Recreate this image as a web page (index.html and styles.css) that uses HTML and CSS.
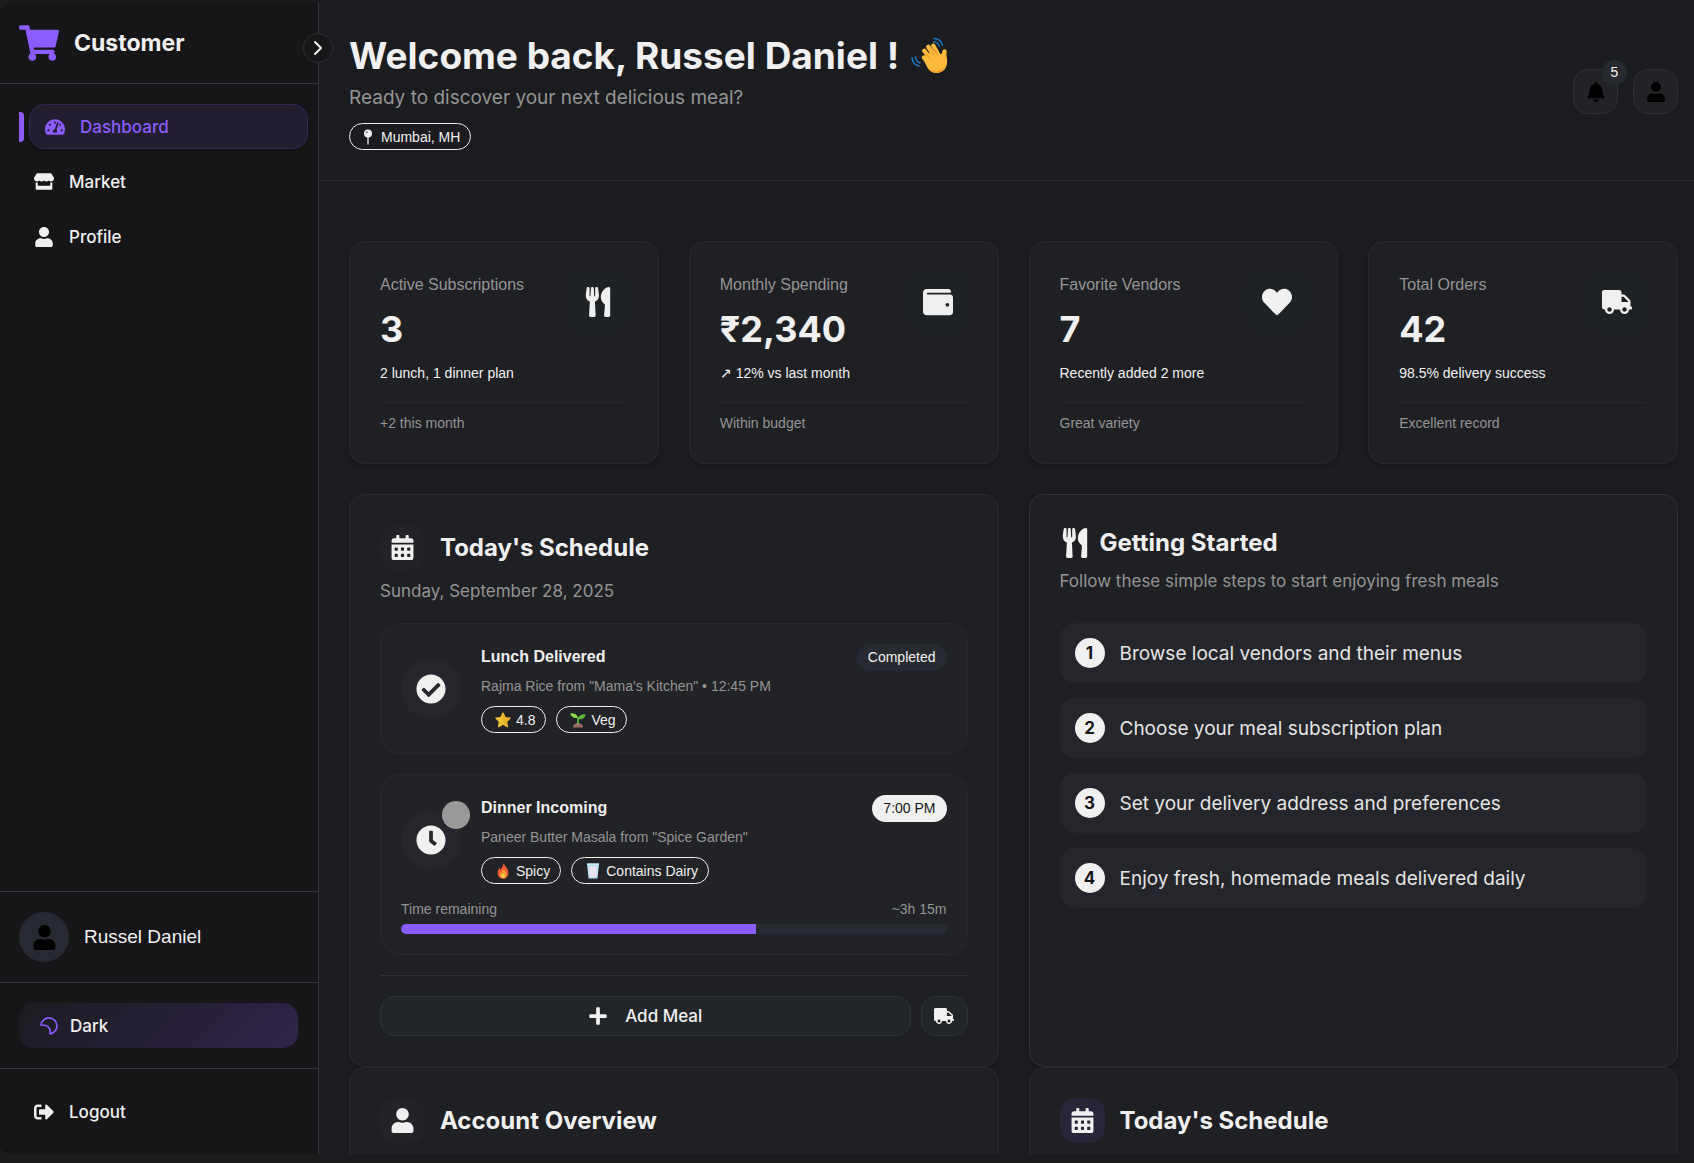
FILE: index.html
```html
<!DOCTYPE html>
<html lang="en">
<head>
<meta charset="utf-8">
<meta name="viewport" content="width=device-width, initial-scale=1">
<title>Customer Dashboard</title>
<link rel="stylesheet" href="styles.css">
</head>
<body>
<svg class="sprite" aria-hidden="true">
  <symbol id="cart" viewBox="0 0 576 512"><path d="M528.12 301.319l47.273-208C578.806 78.301 567.391 64 551.99 64H159.208l-9.166-44.81C147.758 8.021 137.93 0 126.529 0H24C10.745 0 0 10.745 0 24v16c0 13.255 10.745 24 24 24h69.883l70.248 343.435C147.325 417.1 136 435.222 136 456c0 30.928 25.072 56 56 56s56-25.072 56-56c0-15.674-6.447-29.835-16.824-40h209.647C430.447 426.165 424 440.326 424 456c0 30.928 25.072 56 56 56s56-25.072 56-56c0-22.172-12.888-41.332-31.579-50.405l5.517-24.276c3.413-15.018-8.002-29.319-23.403-29.319H218.117l-6.545-32h293.145c11.206 0 20.92-7.754 23.403-18.681z"/></symbol>
  <symbol id="gauge" viewBox="0 0 576 512"><path d="M288 32C128.94 32 0 160.94 0 320c0 52.8 14.25 102.26 39.06 144.8 5.61 9.62 16.3 15.2 27.44 15.2h443c11.14 0 21.83-5.58 27.44-15.2C561.75 422.26 576 372.8 576 320c0-159.06-128.94-288-288-288zm0 64c14.71 0 26.58 10.13 30.32 23.65-1.11 2.26-2.64 4.23-3.45 6.67l-9.22 27.67c-5.13 3.49-10.97 6.01-17.64 6.01-17.67 0-32-14.33-32-32S270.33 96 288 96zM96 384c-17.67 0-32-14.33-32-32s14.33-32 32-32 32 14.33 32 32-14.33 32-32 32zm48-160c-17.67 0-32-14.33-32-32s14.33-32 32-32 32 14.33 32 32-14.33 32-32 32zm246.77-72.41l-61.33 184C343.13 347.33 352 364.54 352 384c0 11.72-3.38 22.55-8.88 32H232.88c-5.5-9.45-8.88-20.28-8.88-32 0-33.94 26.5-61.43 59.9-63.59l61.34-184.01c4.17-12.56 17.73-19.45 30.36-15.17 12.57 4.19 19.35 17.79 15.17 30.36zm14.66 57.2l15.52-46.55c3.47-1.29 7.13-2.23 11.05-2.23 17.67 0 32 14.33 32 32s-14.33 32-32 32c-11.38-.01-20.89-6.28-26.57-15.22zM480 384c-17.67 0-32-14.33-32-32s14.33-32 32-32 32 14.33 32 32-14.33 32-32 32z"/></symbol>
  <symbol id="store" viewBox="0 0 616 512"><path d="M602 118.6L537.1 15C531.3 5.7 521 0 510 0H106C95 0 84.7 5.7 78.9 15L14 118.6c-33.5 53.5-3.8 127.9 58.8 136.4 4.5.6 9.1.9 13.7.9 29.6 0 55.8-13 73.8-33.1 18 20.1 44.3 33.1 73.8 33.1 29.6 0 55.8-13 73.8-33.1 18 20.1 44.3 33.1 73.8 33.1 29.6 0 55.8-13 73.8-33.1 18.1 20.1 44.3 33.1 73.8 33.1 4.7 0 9.2-.3 13.7-.9 62.8-8.4 92.6-82.8 59-136.4zM529.5 288c-10 0-19.9-1.5-29.5-3.8V384H116v-99.8c-9.6 2.2-19.5 3.8-29.5 3.8-6 0-12.1-.4-18-1.2-5.6-.8-11.1-2.1-16.4-3.6V480c0 17.7 14.3 32 32 32h448c17.7 0 32-14.3 32-32V283.2c-5.4 1.6-10.8 2.9-16.4 3.6-6.1.8-12.1 1.2-18.2 1.2z"/></symbol>
  <symbol id="user" viewBox="0 0 448 512"><path d="M224 256c70.7 0 128-57.3 128-128S294.7 0 224 0 96 57.3 96 128s57.3 128 128 128zm89.6 32h-16.7c-22.2 10.2-46.9 16-72.9 16s-50.6-5.8-72.9-16h-16.7C60.2 288 0 348.2 0 422.4V464c0 26.5 21.5 48 48 48h352c26.5 0 48-21.5 48-48v-41.6c0-74.2-60.2-134.4-134.4-134.4z"/></symbol>
  <symbol id="bell" viewBox="0 0 448 512"><path d="M224 512c35.32 0 63.97-28.65 63.97-64H160.03c0 35.35 28.65 64 63.97 64zm215.39-149.71c-19.32-20.76-55.47-51.99-55.47-154.29 0-77.7-54.48-139.9-127.94-155.16V32c0-17.67-14.32-32-31.98-32s-31.98 14.33-31.98 32v20.84C118.56 68.1 64.08 130.3 64.08 208c0 102.3-36.15 133.53-55.47 154.29-6 6.45-8.66 14.16-8.61 21.71.11 16.4 12.98 32 32.1 32h383.8c19.12 0 32-15.6 32.1-32 .05-7.55-2.61-15.27-8.61-21.71z"/></symbol>
  <symbol id="utensils" viewBox="0 0 416 512"><path d="M207.9 15.2c.8 4.7 16.1 94.5 16.1 128.8 0 52.3-27.8 89.6-68.9 104.6L168 486.7c.7 13.7-10.2 25.3-24 25.3H80c-13.7 0-24.7-11.5-24-25.3l12.9-238.1C27.7 233.6 0 196.2 0 144 0 109.6 15.3 19.9 16.1 15.2 19.3-5.1 61.4-5.4 64 16.3v141.2c1.3 3.4 15.1 3.2 16 0 1.4-25.3 7.9-139.2 8-141.8 3.3-20.8 44.7-20.8 47.9 0 .2 2.7 6.6 116.5 8 141.8.9 3.2 14.8 3.4 16 0V16.3c2.6-21.6 44.8-21.4 47.9-1.1zm119.2 285.7l-15 185.1c-1.2 14 9.9 26 23.9 26h56c13.3 0 24-10.7 24-24V24c0-13.2-10.7-24-24-24-82.5 0-221.4 178.5-64.9 300.9z"/></symbol>
  <symbol id="wallet" viewBox="0 0 512 512"><path d="M461.2 128H80c-8.84 0-16-7.16-16-16s7.16-16 16-16h384c8.84 0 16-7.16 16-16 0-26.51-21.49-48-48-48H64C28.65 32 0 60.65 0 96v320c0 35.35 28.65 64 64 64h397.2c28.02 0 50.8-21.53 50.8-48V176c0-26.47-22.78-48-50.8-48zM416 336c-17.67 0-32-14.33-32-32s14.33-32 32-32 32 14.33 32 32-14.33 32-32 32z"/></symbol>
  <symbol id="heart" viewBox="0 0 512 512"><path d="M462.3 62.6C407.5 15.9 326 24.3 275.7 76.2L256 96.5l-19.7-20.3C186.1 24.3 104.5 15.9 49.7 62.6c-62.8 53.6-66.1 149.8-9.9 207.9l193.5 199.8c12.5 12.9 32.8 12.9 45.3 0l193.5-199.8c56.3-58.1 53-154.3-9.8-207.9z"/></symbol>
  <symbol id="truck" viewBox="0 0 640 512"><path d="M624 352h-16V243.9c0-12.7-5.1-24.9-14.1-33.9L494 110.1c-9-9-21.2-14.1-33.9-14.1H416V48c0-26.5-21.5-48-48-48H48C21.5 0 0 21.5 0 48v320c0 26.5 21.5 48 48 48h16c0 53 43 96 96 96s96-43 96-96h128c0 53 43 96 96 96s96-43 96-96h48c8.8 0 16-7.2 16-16v-32c0-8.8-7.2-16-16-16zM160 464c-26.5 0-48-21.5-48-48s21.5-48 48-48 48 21.5 48 48-21.5 48-48 48zm320 0c-26.5 0-48-21.5-48-48s21.5-48 48-48 48 21.5 48 48-21.5 48-48 48zm80-208H416V144h44.1l99.9 99.9V256z"/></symbol>
  <symbol id="calendar" viewBox="0 0 448 512"><path fill-rule="evenodd" d="M0 464c0 26.5 21.5 48 48 48h352c26.5 0 48-21.5 48-48V192H0v272zM76 256h40a12 12 0 0 1 12 12v40a12 12 0 0 1-12 12H76a12 12 0 0 1-12-12v-40a12 12 0 0 1 12-12zm128 0h40a12 12 0 0 1 12 12v40a12 12 0 0 1-12 12h-40a12 12 0 0 1-12-12v-40a12 12 0 0 1 12-12zm128 0h40a12 12 0 0 1 12 12v40a12 12 0 0 1-12 12h-40a12 12 0 0 1-12-12v-40a12 12 0 0 1 12-12zM76 384h40a12 12 0 0 1 12 12v40a12 12 0 0 1-12 12H76a12 12 0 0 1-12-12v-40a12 12 0 0 1 12-12zm128 0h40a12 12 0 0 1 12 12v40a12 12 0 0 1-12 12h-40a12 12 0 0 1-12-12v-40a12 12 0 0 1 12-12zm128 0h40a12 12 0 0 1 12 12v40a12 12 0 0 1-12 12h-40a12 12 0 0 1-12-12v-40a12 12 0 0 1 12-12zM400 64h-48V16c0-8.8-7.2-16-16-16h-32c-8.8 0-16 7.2-16 16v48H160V16c0-8.8-7.2-16-16-16h-32c-8.8 0-16 7.2-16 16v48H48C21.5 64 0 85.5 0 112v48h448v-48c0-26.5-21.5-48-48-48z"/></symbol>
  <symbol id="check" viewBox="0 0 512 512"><path d="M504 256c0 136.967-111.033 248-248 248S8 392.967 8 256 119.033 8 256 8s248 111.033 248 248zM227.314 387.314l184-184c6.248-6.248 6.248-16.379 0-22.627l-22.627-22.627c-6.248-6.249-16.379-6.249-22.628 0L216 308.118l-70.059-70.059c-6.248-6.248-16.379-6.248-22.628 0l-22.627 22.627c-6.248 6.248-6.248 16.379 0 22.627l104 104c6.249 6.249 16.379 6.249 22.628.001z"/></symbol>
  <symbol id="clock" viewBox="0 0 512 512"><path d="M256,8C119,8,8,119,8,256S119,504,256,504,504,393,504,256,393,8,256,8Zm92.49,313h0l-20,25a16,16,0,0,1-22.49,2.5h0l-67-49.72a40,40,0,0,1-15-31.23V112a16,16,0,0,1,16-16h32a16,16,0,0,1,16,16V256l58,42.5A16,16,0,0,1,348.49,321Z"/></symbol>
  <symbol id="plus" viewBox="0 0 448 512"><path d="M416 208H272V64c0-17.67-14.33-32-32-32h-32c-17.67 0-32 14.33-32 32v144H32c-17.67 0-32 14.33-32 32v32c0 17.67 14.33 32 32 32h144v144c0 17.67 14.33 32 32 32h32c17.67 0 32-14.33 32-32V304h144c17.67 0 32-14.33 32-32v-32c0-17.67-14.33-32-32-32z"/></symbol>
  <symbol id="logout" viewBox="0 0 512 512"><path d="M497 273L329 441c-15 15-41 4.5-41-17v-96H152c-13.3 0-24-10.7-24-24v-96c0-13.3 10.7-24 24-24h136V88c0-21.4 25.9-32 41-17l168 168c9.3 9.4 9.3 24.6 0 34zM192 436v-40c0-6.6-5.4-12-12-12H96c-17.7 0-32-14.3-32-32V160c0-17.7 14.3-32 32-32h84c6.6 0 12-5.4 12-12V76c0-6.6-5.4-12-12-12H96c-53 0-96 43-96 96v192c0 53 43 96 96 96h84c6.6 0 12-5.4 12-12z"/></symbol>
  <symbol id="moon" viewBox="0 0 18 18"><path d="M1 8A8 8 0 1 1 10 16.800Q11.500 8 1 8Z" fill="none" stroke="currentColor" stroke-width="1.700" stroke-linejoin="round"/></symbol>
  <symbol id="chevron" viewBox="0 0 10 16"><path d="M2 2l6 6-6 6" fill="none" stroke="currentColor" stroke-width="2" stroke-linecap="round" stroke-linejoin="round"/></symbol>
  <symbol id="pin" viewBox="0 0 16 16"><path d="M7.200 8h1.600v7l-.8 1-.8-1z" fill="#c8c8c8"/><circle cx="8" cy="4.500" r="4" fill="#f2f2f2"/><circle cx="6.800" cy="3.200" r="1.100" fill="#8a8a8c"/></symbol>
  <symbol id="star" viewBox="0 0 16 16"><path d="M8 1l2.200 4.500 4.900.7-3.500 3.500.8 4.900L8 12.300l-4.400 2.300.8-4.900L.9 6.200l4.900-.7z" fill="#efc02f" stroke="#efc02f" stroke-width="1.200" stroke-linejoin="round"/><path d="M8 1l2.200 4.500 4.900.7-3.500 3.500.8 4.900L8 12.300z" fill="#dba228" opacity=".5"/></symbol>
  <symbol id="sprout" viewBox="0 0 16 16"><path d="M3 15.500c0-3 2.500-4.500 5-4.500s5 1.500 5 4.500z" fill="#9b6b5e"/><path d="M8 12V5" stroke="#5fb53a" stroke-width="1.800" fill="none"/><path d="M8 5.800C7 2 4 .8.3 1.200 1 4.800 4 6.800 8 5.800z" fill="#8ddb4a"/><path d="M8 7c.6-3.600 3.500-5 7.500-4.600C15.200 6 12 8 8 7z" fill="#5dbb3c"/></symbol>
  <symbol id="fire" viewBox="0 0 16 16"><path d="M8.500 0c.8 2.800 4.900 5 4.900 9.700 0 3.500-2.200 6.100-5.400 6.100s-5.400-2.400-5.400-5.700c0-2.300 1-3.600 1.800-5l1 1.600C6.500 4.500 8.500 3 8.500 0z" fill="#ee5a36"/><path d="M9 6c.3 2 2.600 2.600 2.600 5.300 0 2.400-1.300 4-3.400 4-2 0-3.400-1.400-3.400-3.500C4.800 9 8 8.500 9 6z" fill="#fb9a32"/><path d="M8.600 10c.2 1 1.200 1.500 1.200 2.900S9 15 8 15s-1.800-.8-1.800-2C6.200 11.500 8 11.500 8.600 10z" fill="#fdd24a"/></symbol>
  <symbol id="milk" viewBox="0 0 16 16"><path d="M2 .5h12L12.500 15.500h-9z" fill="#b4e2f7"/><path d="M3.700 3.500h8.600L11.400 14H4.600z" fill="#e9e2f0"/><path d="M2 .5h12l-.2 1.500H2.200z" fill="#cdeefc"/></symbol>
  <symbol id="wave" viewBox="0 0 38 38"><path d="M23 1.500c4.500.2 7.500 2.800 8.500 6.800M22.500 4.800c3 .2 5 1.800 5.800 4.200M1 20.500c.2 4.500 3 7.500 7 8.500M4.500 20c.2 3 1.800 4.800 4.300 5.800" fill="none" stroke="#1f78c4" stroke-width="1.500" stroke-linecap="round"/><g stroke="#fdbb3e" stroke-linecap="round" fill="none" stroke-width="4.400"><path d="M13 20.500l6 7"/><path d="M13.300 13.800l7.500 10"/><path d="M17.300 9.800l7 11"/><path d="M22.300 8.800l6 11"/><path d="M33.500 14.500l-1.500 8"/></g><path d="M12 21.500l8-7 9 2.500 6.200-1.500c.2 4 1.300 7 .8 11-.8 6-5 9.500-10 9.500-4.600 0-7.500-2-10-6z" fill="#fdb939"/><path d="M15.200 16.300l4.300 5.800M19 12.300l4.400 6.800M23 11.500l3.700 6.500" stroke="#e3962a" stroke-width=".8" stroke-linecap="round" fill="none"/><path d="M16 30c4 5.500 13 6 18-1-1.500 5-4.500 7-8 7-4.500 0-7.500-2-10-6z" fill="#f39a2c"/></symbol>
</svg>

<div class="app">
  <aside class="sidebar">
    <div class="brand">
      <svg class="brand-logo" aria-hidden="true"><use href="#cart"/></svg>
      <span class="brand-name">Customer</span>
      <button class="collapse" type="button" aria-label="Toggle sidebar"><svg class="chevron" aria-hidden="true"><use href="#chevron"/></svg></button>
    </div>
    <nav class="nav">
      <a class="nav-link active" href="#dashboard"><svg class="icon-20" aria-hidden="true"><use href="#gauge"/></svg>Dashboard</a>
      <a class="nav-link" href="#market"><svg class="icon-20 short" aria-hidden="true"><use href="#store"/></svg>Market</a>
      <a class="nav-link" href="#profile"><svg class="icon-20" aria-hidden="true"><use href="#user"/></svg>Profile</a>
    </nav>
    <div class="side-section account">
      <span class="avatar"><svg class="icon-25" aria-hidden="true"><use href="#user"/></svg></span>
      <span class="account-name">Russel Daniel</span>
    </div>
    <div class="side-section">
      <button class="theme" type="button"><svg class="moon" aria-hidden="true"><use href="#moon"/></svg>Dark</button>
    </div>
    <div class="side-section">
      <a class="nav-link" href="#logout-page"><svg class="icon-20" aria-hidden="true"><use href="#logout"/></svg>Logout</a>
    </div>
  </aside>

  <main class="main">
    <header class="header">
      <div class="welcome">
        <h1 class="title">Welcome back, Russel Daniel ! <svg class="wave" role="img" aria-label="Waving hand"><use href="#wave"/></svg></h1>
        <p class="subtitle">Ready to discover your next delicious meal?</p>
        <span class="chip"><svg class="emoji" aria-hidden="true"><use href="#pin"/></svg>Mumbai, MH</span>
      </div>
      <div class="actions">
        <button class="square" type="button" aria-label="Notifications"><svg class="icon-20" aria-hidden="true"><use href="#bell"/></svg><span class="count">5</span></button>
        <button class="square" type="button" aria-label="Account"><svg class="icon-20" aria-hidden="true"><use href="#user"/></svg></button>
      </div>
    </header>

    <div class="content">
      <section class="stats" aria-label="Statistics">
        <article class="card stat">
          <div class="stat-top">
            <div><h2 class="stat-label">Active Subscriptions</h2><p class="stat-value">3</p><p class="stat-note">2 lunch, 1 dinner plan</p></div>
            <span class="stat-icon"><svg class="icon-30" aria-hidden="true"><use href="#utensils"/></svg></span>
          </div>
          <p class="stat-foot">+2 this month</p>
        </article>
        <article class="card stat">
          <div class="stat-top">
            <div><h2 class="stat-label">Monthly Spending</h2><p class="stat-value">₹2,340</p><p class="stat-note">↗ 12% vs last month</p></div>
            <span class="stat-icon"><svg class="icon-30" aria-hidden="true"><use href="#wallet"/></svg></span>
          </div>
          <p class="stat-foot">Within budget</p>
        </article>
        <article class="card stat">
          <div class="stat-top">
            <div><h2 class="stat-label">Favorite Vendors</h2><p class="stat-value">7</p><p class="stat-note">Recently added 2 more</p></div>
            <span class="stat-icon"><svg class="icon-30" aria-hidden="true"><use href="#heart"/></svg></span>
          </div>
          <p class="stat-foot">Great variety</p>
        </article>
        <article class="card stat">
          <div class="stat-top">
            <div><h2 class="stat-label">Total Orders</h2><p class="stat-value">42</p><p class="stat-note">98.5% delivery success</p></div>
            <span class="stat-icon"><svg class="icon-30" aria-hidden="true"><use href="#truck"/></svg></span>
          </div>
          <p class="stat-foot">Excellent record</p>
        </article>
      </section>

      <div class="panels">
        <section class="card panel">
          <div class="panel-head"><span class="tile"><svg class="icon-25" aria-hidden="true"><use href="#calendar"/></svg></span><h2 class="panel-title">Today's Schedule</h2></div>
          <p class="panel-sub">Sunday, September 28, 2025</p>
          <div class="meals">
            <article class="meal">
              <div class="meal-row">
                <span class="meal-icon"><svg class="icon-30" aria-hidden="true"><use href="#check"/></svg></span>
                <div class="meal-body">
                  <h3 class="meal-title">Lunch Delivered</h3>
                  <p class="meal-text">Rajma Rice from "Mama's Kitchen" • 12:45 PM</p>
                  <div class="chips"><span class="chip"><svg class="emoji" aria-hidden="true"><use href="#star"/></svg>4.8</span><span class="chip"><svg class="emoji" aria-hidden="true"><use href="#sprout"/></svg>Veg</span></div>
                </div>
                <span class="status">Completed</span>
              </div>
            </article>
            <article class="meal">
              <div class="meal-row">
                <span class="meal-icon"><svg class="icon-30" aria-hidden="true"><use href="#clock"/></svg><span class="pulse"></span></span>
                <div class="meal-body">
                  <h3 class="meal-title">Dinner Incoming</h3>
                  <p class="meal-text">Paneer Butter Masala from "Spice Garden"</p>
                  <div class="chips"><span class="chip"><svg class="emoji" aria-hidden="true"><use href="#fire"/></svg>Spicy</span><span class="chip"><svg class="emoji" aria-hidden="true"><use href="#milk"/></svg>Contains Dairy</span></div>
                </div>
                <span class="status light">7:00 PM</span>
              </div>
              <div class="remaining"><span>Time remaining</span><span>~3h 15m</span></div>
              <div class="bar"><div class="bar-fill" style="width: 65%"></div></div>
            </article>
          </div>
          <div class="panel-actions">
            <button class="btn add" type="button"><svg class="icon-20" aria-hidden="true"><use href="#plus"/></svg>Add Meal</button>
            <button class="btn track" type="button" aria-label="Track delivery"><svg class="icon-20" aria-hidden="true"><use href="#truck"/></svg></button>
          </div>
        </section>

        <section class="card panel guide">
          <div class="guide-head"><svg class="icon-30" aria-hidden="true"><use href="#utensils"/></svg><h2 class="panel-title">Getting Started</h2></div>
          <p class="guide-sub">Follow these simple steps to start enjoying fresh meals</p>
          <ol class="steps">
            <li class="step"><span class="step-num">1</span>Browse local vendors and their menus</li>
            <li class="step"><span class="step-num">2</span>Choose your meal subscription plan</li>
            <li class="step"><span class="step-num">3</span>Set your delivery address and preferences</li>
            <li class="step"><span class="step-num">4</span>Enjoy fresh, homemade meals delivered daily</li>
          </ol>
        </section>

        <section class="card panel">
          <div class="panel-head"><span class="tile"><svg class="icon-25" aria-hidden="true"><use href="#user"/></svg></span><h2 class="panel-title">Account Overview</h2></div>
        </section>
        <section class="card panel">
          <div class="panel-head"><span class="tile violet"><svg class="icon-25" aria-hidden="true"><use href="#calendar"/></svg></span><h2 class="panel-title">Today's Schedule</h2></div>
        </section>
      </div>
    </div>
  </main>
</div>
</body>
</html>
```
FILE: styles.css
```css
:root {
  --bg: #1b1c20;
  --card: #1f2024;
  --line: #37373b;
  --text: #f0f0f0;
  --muted: #949494;
  --violet: #8b5cff;
  --ui: "Inter", sans-serif;
  --small: "Liberation Sans", Arial, sans-serif;
}

* { box-sizing: border-box; }
h1, h2, h3, p, ol { margin: 0; padding: 0; }
button { font: inherit; color: inherit; cursor: pointer; }
a { color: inherit; text-decoration: none; }
svg { fill: currentColor; flex: none; }

body {
  margin: 0;
  height: 100vh;
  padding: 3px 0 9px;
  overflow: hidden;
  background: #1a1b1d;
  color: var(--text);
  font-family: var(--ui);
}

.sprite { position: absolute; width: 0; height: 0; }
.icon-20 { width: 20px; height: 20px; }
.icon-20.short { height: 17px; }
.icon-25 { width: 25px; height: 25px; }
.icon-30 { width: 30px; height: 30px; }

.app { display: flex; height: 100%; }

/* Sidebar */
.sidebar {
  display: flex;
  flex-direction: column;
  flex: none;
  width: 319px;
  background: #161618;
  border-right: 1px solid var(--line);
  border-radius: 10px 0 0 10px;
}
.brand {
  position: relative;
  display: flex;
  align-items: center;
  gap: 15px;
  height: 81px;
  padding: 0 19px;
  border-bottom: 1px solid var(--line);
}
.brand-logo { width: 40px; height: 36px; color: var(--violet); }
.brand-name { font-size: 23px; font-weight: 700; line-height: 30px; }
.collapse {
  position: absolute;
  right: -15px;
  top: 30px;
  display: grid;
  place-items: center;
  width: 30px;
  height: 30px;
  padding: 0;
  border: 1px solid #2e2e32;
  border-radius: 50%;
  background: #161618;
}
.chevron { width: 10px; height: 16px; }

.nav { display: flex; flex-direction: column; gap: 10px; flex: 1; padding: 20px 20px 20px 19px; }
.nav-link {
  display: flex;
  align-items: center;
  gap: 15px;
  height: 45px;
  padding: 0 15px;
  border-radius: 15px;
  font-size: 17px;
  font-weight: 500;
}
.nav-link.active {
  position: relative;
  margin: 0 -10px 0 10px;
  border: 1px solid #35265c;
  background: #231d30;
  color: var(--violet);
  box-shadow: 0 2px 4px rgba(0, 0, 0, 0.3);
}
.nav-link.active::before {
  content: "";
  position: absolute;
  left: -11px;
  top: 7px;
  width: 5px;
  height: 30px;
  border-radius: 0 4px 4px 0;
  background: var(--violet);
}

.side-section { padding: 20px 20px 20px 19px; border-top: 1px solid var(--line); }
.account { display: flex; align-items: center; gap: 15px; }
.avatar {
  display: grid;
  place-items: center;
  width: 50px;
  height: 50px;
  border-radius: 50%;
  background: #282a32;
  color: #000;
}
.account-name { font-family: var(--small); font-size: 19px; }
.theme {
  display: flex;
  align-items: center;
  gap: 12px;
  width: 100%;
  height: 45px;
  padding: 0 21px;
  border: 0;
  border-radius: 15px;
  background: linear-gradient(135deg, #1b1c20, #30234a);
  font-size: 17px;
  font-weight: 500;
}
.moon { width: 18px; height: 18px; color: var(--violet); }

/* Header */
.main { flex: 1; min-width: 0; overflow: hidden; background: var(--bg); }
.header {
  display: flex;
  align-items: center;
  justify-content: space-between;
  height: 178px;
  padding: 0 16px 0 30px;
  border-bottom: 1px solid #27282c;
}
.title { display: flex; align-items: center; gap: 12px; font-size: 37px; font-weight: 700; line-height: 46px; }
.wave { width: 38px; height: 38px; }
.subtitle { margin: 4px 0 10px; color: var(--muted); font-size: 19px; line-height: 30px; }
.chip {
  display: inline-flex;
  align-items: center;
  gap: 5px;
  height: 27px;
  padding: 0 10px;
  border: 1px solid var(--text);
  border-radius: 14px;
  font-family: var(--small);
  font-size: 14px;
  white-space: nowrap;
}
.emoji { width: 16px; height: 16px; }
.actions { display: flex; gap: 15px; }
.square {
  position: relative;
  display: grid;
  place-items: center;
  width: 45px;
  height: 45px;
  padding: 0;
  border: 1px solid #2f3034;
  border-radius: 15px;
  background: #222327;
  color: #000;
}
.count {
  position: absolute;
  right: -10px;
  top: -10px;
  width: 25px;
  height: 25px;
  border-radius: 50%;
  background: #282a32;
  color: var(--text);
  font-family: var(--small);
  font-size: 14px;
  line-height: 25px;
}

/* Cards */
.content { padding: 60px 16px 30px 30px; }
.card {
  border: 1px solid #28292d;
  border-radius: 15px;
  background: var(--card);
  box-shadow: 0 2px 4px rgba(0, 0, 0, 0.25);
}
.stats { display: grid; grid-template-columns: repeat(4, minmax(0, 1fr)); gap: 30px; margin-bottom: 30px; }
.stat { padding: 30px; }
.stat-top { display: flex; justify-content: space-between; padding-bottom: 17px; border-bottom: 1px solid #26282b; }
.stat-label { color: var(--muted); font-family: var(--small); font-size: 16px; font-weight: 400; line-height: 26px; }
.stat-value { margin: 8px 0; font-size: 36px; font-weight: 700; line-height: 47px; }
.stat-note { font-family: var(--small); font-size: 14px; line-height: 24px; }
.stat-icon { display: grid; place-items: center; flex: none; width: 60px; height: 60px; border-radius: 20px; background: #1e2225; }
.stat-foot { padding-top: 10px; color: var(--muted); font-family: var(--small); font-size: 14px; line-height: 20px; }

.panels { display: grid; grid-template-columns: repeat(2, minmax(0, 1fr)); column-gap: 30px; }
.panel { padding: 30px; }
.panel-head { display: flex; align-items: center; gap: 15px; }
.tile { display: grid; place-items: center; width: 45px; height: 45px; border-radius: 15px; background: #222327; }
.tile.violet { background: #292538; }
.panel-title { font-size: 24px; font-weight: 700; line-height: 32px; }
.panel-sub { margin: 8px 0 19px; color: var(--muted); font-size: 17px; line-height: 26px; }

.meals { display: grid; gap: 20px; }
.meal { padding: 20px; border: 1px solid #292a2e; border-radius: 20px; background: #222327; }
.meal-row { display: flex; align-items: center; gap: 20px; }
.meal-icon { position: relative; display: grid; place-items: center; flex: none; width: 60px; height: 60px; border-radius: 50%; background: #26272c; }
.pulse { position: absolute; right: -9px; top: -9px; width: 28px; height: 28px; border-radius: 50%; background: #999; }
.meal-body { flex: 1; }
.meal-title { font-family: var(--small); font-size: 16px; font-weight: 700; line-height: 26px; }
.meal-text { margin: 4px 0 8px; color: var(--muted); font-family: var(--small); font-size: 14px; line-height: 24px; }
.chips { display: flex; gap: 10px; }
.chips .chip { padding-left: 13px; }
.status { align-self: flex-start; height: 27px; padding: 0 11px; border-radius: 14px; background: #282a32; font-family: var(--small); font-size: 14px; line-height: 27px; }
.status.light { background: var(--text); color: #161618; }
.remaining { display: flex; justify-content: space-between; padding: 14px 0 4px; color: var(--muted); font-family: var(--small); font-size: 14px; line-height: 22px; }
.bar { height: 10px; border-radius: 5px; background: #282a32; overflow: hidden; }
.bar-fill { height: 100%; background: var(--violet); }

.panel-actions { display: flex; gap: 10px; margin-top: 20px; padding-top: 20px; border-top: 1px solid #303135; }
.btn {
  display: flex;
  align-items: center;
  justify-content: center;
  gap: 17px;
  height: 40px;
  border: 1px solid #303236;
  border-radius: 15px;
  background: #222629;
  font-size: 17px;
  font-weight: 500;
}
.add { flex: 1; }
.track { width: 47px; padding: 0; }

.guide { border-color: #303236; }
.guide-head { display: flex; align-items: center; gap: 10px; height: 36px; }
.guide-sub { margin: 7px 0 29px; color: var(--muted); font-size: 17px; line-height: 26px; }
.steps { display: grid; gap: 15px; list-style: none; }
.step { display: flex; align-items: center; gap: 15px; height: 60px; padding: 0 15px; border-radius: 15px; background: #25262b; color: #e4e4e4; font-size: 19px; }
.step-num { display: grid; place-items: center; width: 30px; height: 30px; border-radius: 50%; background: var(--text); color: #161618; font-size: 17px; font-weight: 700; }
```
